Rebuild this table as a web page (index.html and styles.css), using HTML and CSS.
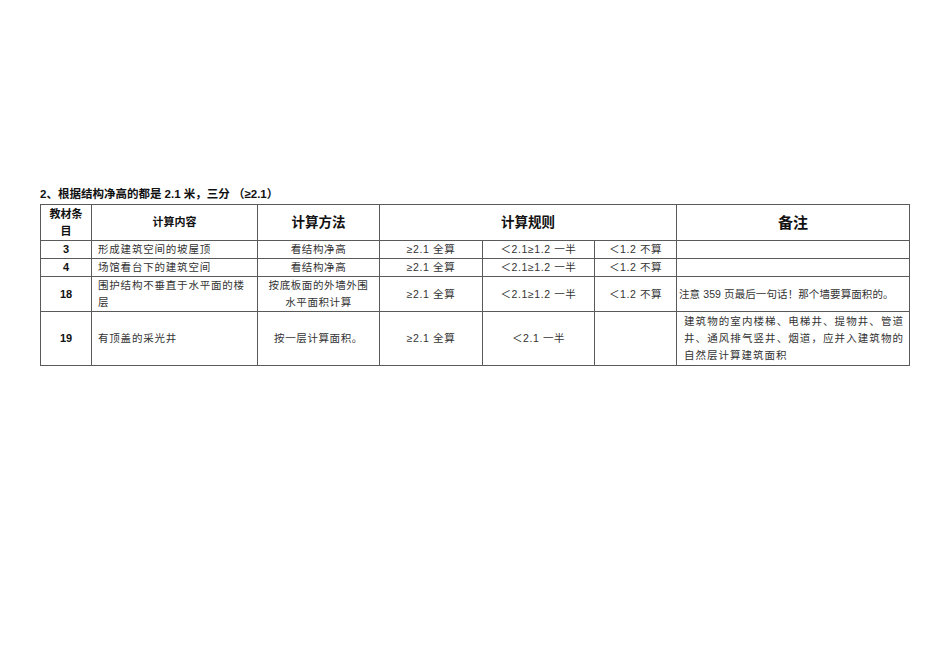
FILE: index.html
```html
<!DOCTYPE html>
<html lang="zh">
<head>
<meta charset="utf-8">
<link rel="stylesheet" href="styles.css">
</head>
<body>
<div class="page">
  <div class="title">2、根据结构净高的都是 2.1 米，三分 （≥2.1）</div>
  <table class="rules">
    <colgroup>
      <col class="c-no"><col class="c-content"><col class="c-method"><col class="c-r1"><col class="c-r2"><col class="c-r3"><col class="c-note">
    </colgroup>
    <tr class="head">
      <th class="h-sm h-no">教材条目</th>
      <th class="h-sm">计算内容</th>
      <th class="h-md">计算方法</th>
      <th class="h-md" colspan="3">计算规则</th>
      <th class="h-lg">备注</th>
    </tr>
    <tr class="r-short">
      <td class="no">3</td>
      <td class="txt">形成建筑空间的坡屋顶</td>
      <td class="ctr meth">看结构净高</td>
      <td class="ctr">≥2.1 全算</td>
      <td class="ctr">＜2.1≥1.2 一半</td>
      <td class="ctr">＜1.2 不算</td>
      <td></td>
    </tr>
    <tr class="r-short">
      <td class="no">4</td>
      <td class="txt">场馆看台下的建筑空间</td>
      <td class="ctr meth">看结构净高</td>
      <td class="ctr">≥2.1 全算</td>
      <td class="ctr">＜2.1≥1.2 一半</td>
      <td class="ctr">＜1.2 不算</td>
      <td></td>
    </tr>
    <tr class="r-mid">
      <td class="no">18</td>
      <td class="txt">围护结构不垂直于水平面的楼层</td>
      <td class="ctr meth">按底板面的外墙外围水平面积计算</td>
      <td class="ctr">≥2.1 全算</td>
      <td class="ctr">＜2.1≥1.2 一半</td>
      <td class="ctr">＜1.2 不算</td>
      <td class="note-tight">注意 359 页最后一句话！那个墙要算面积的。</td>
    </tr>
    <tr class="r-tall">
      <td class="no">19</td>
      <td class="txt">有顶盖的采光井</td>
      <td class="ctr meth">按一层计算面积。</td>
      <td class="ctr">≥2.1 全算</td>
      <td class="ctr">＜2.1 一半</td>
      <td></td>
      <td class="note">建筑物的室内楼梯、电梯井、提物井、管道井、通风排气竖井、烟道，应并入建筑物的自然层计算建筑面积</td>
    </tr>
  </table>
</div>
</body>
</html>
```

FILE: styles.css
```css
html, body {
  margin: 0;
  padding: 0;
  background: #ffffff;
}

.page {
  padding: 187px 0 0 40px;
  font-family: "Liberation Sans", "Noto Sans CJK SC", sans-serif;
  color: #222;
}

.title {
  font-size: 11.5px;
  font-weight: bold;
  line-height: 14px;
  height: 17px;
  color: #111;
}

.rules {
  border-collapse: collapse;
  table-layout: fixed;
  width: 869px;
}

.c-no { width: 51px; }
.c-content { width: 166px; }
.c-method { width: 122px; }
.c-r1 { width: 103px; }
.c-r2 { width: 112px; }
.c-r3 { width: 82px; }
.c-note { width: 233px; }

.rules th, .rules td {
  border: 1px solid #5a5a5a;
  padding: 0;
  vertical-align: middle;
}

.head { height: 36px; }
.head th {
  color: #111;
  font-weight: bold;
  text-align: center;
}
.h-sm { font-size: 11px; line-height: 17px; }
.h-no { padding: 0 4px !important; }
.h-md { font-size: 13.5px; line-height: 17px; }
.h-lg { font-size: 15px; line-height: 17px; }

.r-short { height: 18px; }
.r-mid { height: 35px; }
.r-tall { height: 54px; }

.rules td {
  font-size: 10.5px;
  line-height: 17px;
  color: #333;
  font-family: "Liberation Sans", "Noto Sans CJK SC", sans-serif;
}

.no {
  text-align: center;
  font-weight: bold;
  color: #111 !important;
  font-size: 11px !important;
}

.txt {
  text-align: left;
  padding-left: 6px !important;
  padding-right: 4px !important;
  letter-spacing: 0.8px;
}

.ctr {
  text-align: center;
  letter-spacing: 0.6px;
}

.meth {
  padding: 0 8px !important;
}

.note-tight {
  padding-left: 2px !important;
  letter-spacing: 0.1px;
  white-space: nowrap;
}

.note {
  padding: 0 5px 0 7px !important;
  text-align: justify;
  letter-spacing: 1px;
}
```
